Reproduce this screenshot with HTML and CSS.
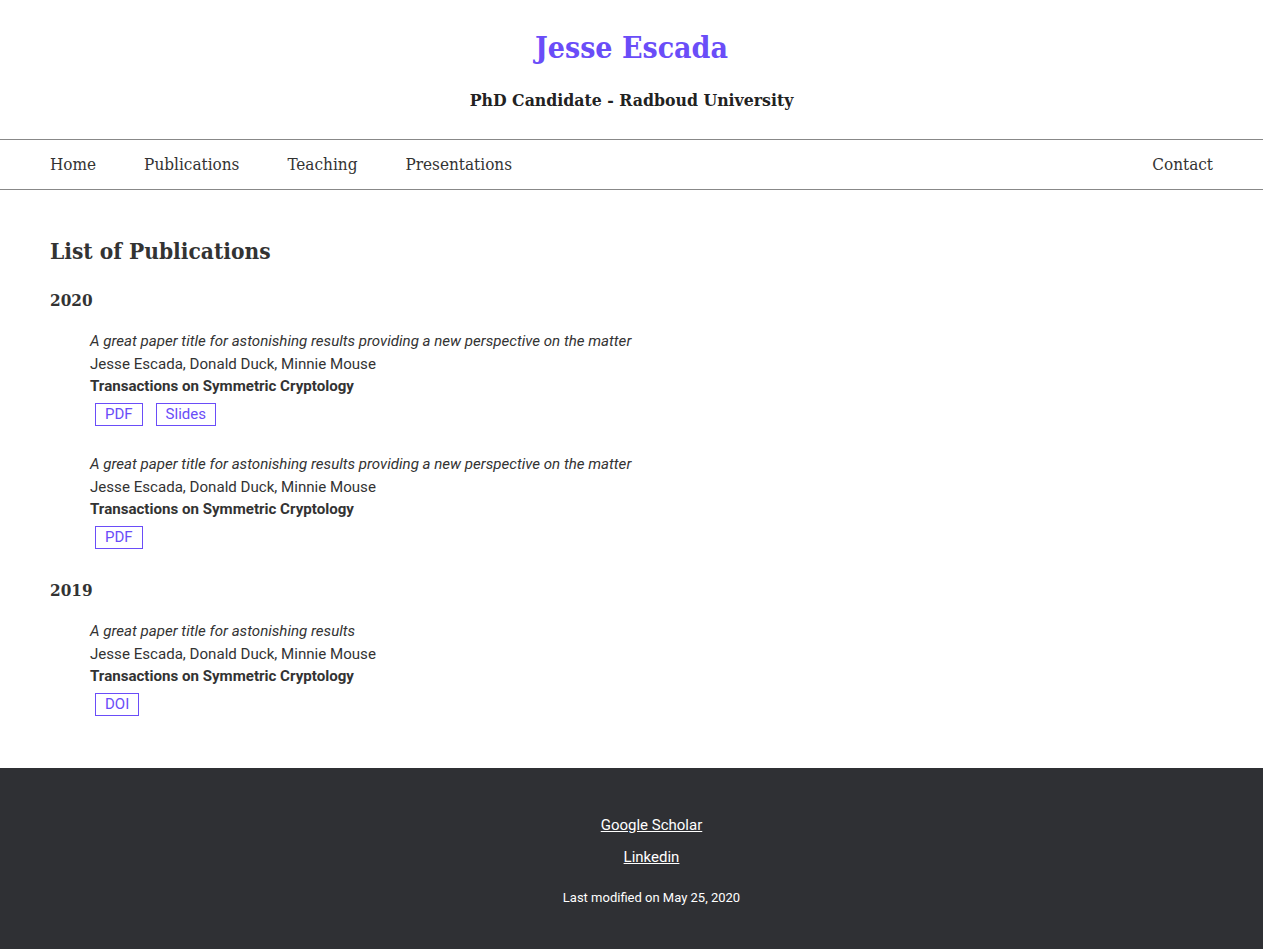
FILE: index.html
```html
<!DOCTYPE html>
<html lang="en">
<head>
<meta charset="utf-8">
<title>Jesse Escada - Publications</title>
<link rel="stylesheet" href="styles.css">
</head>
<body>
<header class="site-header">
  <h1 class="site-title">Jesse Escada</h1>
  <p class="site-subtitle">PhD Candidate - Radboud University</p>
</header>
<nav class="site-nav">
  <ul class="nav-left">
    <li><a href="#">Home</a></li>
    <li><a href="#">Publications</a></li>
    <li><a href="#">Teaching</a></li>
    <li><a href="#">Presentations</a></li>
  </ul>
  <ul class="nav-right">
    <li><a href="#">Contact</a></li>
  </ul>
</nav>
<main class="content">
  <h2 class="page-title">List of Publications</h2>
  <section class="year">
    <h3 class="year-title">2020</h3>
    <div class="pub">
      <div class="pub-title">A great paper title for astonishing results providing a new perspective on the matter</div>
      <div class="pub-authors">Jesse Escada, Donald Duck, Minnie Mouse</div>
      <div class="pub-venue">Transactions on Symmetric Cryptology</div>
      <div class="pub-links"><a class="btn" href="#">PDF</a><a class="btn" href="#">Slides</a></div>
    </div>
    <div class="pub">
      <div class="pub-title">A great paper title for astonishing results providing a new perspective on the matter</div>
      <div class="pub-authors">Jesse Escada, Donald Duck, Minnie Mouse</div>
      <div class="pub-venue">Transactions on Symmetric Cryptology</div>
      <div class="pub-links"><a class="btn" href="#">PDF</a></div>
    </div>
  </section>
  <section class="year">
    <h3 class="year-title">2019</h3>
    <div class="pub">
      <div class="pub-title">A great paper title for astonishing results</div>
      <div class="pub-authors">Jesse Escada, Donald Duck, Minnie Mouse</div>
      <div class="pub-venue">Transactions on Symmetric Cryptology</div>
      <div class="pub-links"><a class="btn" href="#">DOI</a></div>
    </div>
  </section>
</main>
<footer class="site-footer">
  <a class="footer-link" href="#">Google Scholar</a>
  <a class="footer-link" href="#">Linkedin</a>
  <p class="footer-note">Last modified on May 25, 2020</p>
</footer>
</body>
</html>
```
FILE: styles.css
```css
html, body {
  margin: 0;
  padding: 0;
}
body {
  font-family: Roboto, "Liberation Sans", sans-serif;
  color: #333;
  background: #fff;
}
.site-header {
  text-align: center;
  padding: 28px 0 27px;
}
.site-title {
  margin: 0;
  font-family: "DejaVu Serif Condensed", "DejaVu Serif", serif;
  font-stretch: condensed;
  font-size: 30px;
  line-height: 40px;
  font-weight: 700;
  color: #6a4df8;
}
.site-subtitle {
  margin: 20px 0 0;
  font-family: "DejaVu Serif Condensed", "DejaVu Serif", serif;
  font-stretch: condensed;
  font-size: 17.5px;
  line-height: 24px;
  font-weight: 700;
  color: #222;
}
.site-nav {
  display: flex;
  justify-content: space-between;
  border-top: 1px solid #888;
  border-bottom: 1px solid #888;
  padding: 0 50px;
}
.nav-left, .nav-right {
  list-style: none;
  margin: 0;
  padding: 0;
  display: flex;
  gap: 48px;
}
.site-nav a {
  display: block;
  line-height: 49px;
  font-family: "DejaVu Serif Condensed", "DejaVu Serif", serif;
  font-stretch: condensed;
  font-size: 17px;
  color: #333;
  text-decoration: none;
}
.content {
  padding: 46px 50px 52px;
}
.page-title {
  margin: 0;
  font-family: "DejaVu Serif Condensed", "DejaVu Serif", serif;
  font-stretch: condensed;
  font-size: 22.5px;
  line-height: 30px;
  font-weight: 700;
  color: #333;
}
.year-title {
  margin: 23px 0 19px;
  font-family: "DejaVu Serif Condensed", "DejaVu Serif", serif;
  font-stretch: condensed;
  font-size: 17px;
  line-height: 22px;
  font-weight: 700;
  color: #333;
}
.year + .year {
  padding-top: 3px;
}
.year + .year .year-title {
  margin-top: 0;
}
.pub {
  padding-left: 40px;
  margin-bottom: 27px;
  font-size: 15.1px;
  line-height: 22.5px;
}
.year:last-child .pub:last-child {
  margin-bottom: 0;
}
.pub-title {
  font-style: italic;
}
.pub-venue {
  font-weight: 700;
}
.pub-links {
  display: flex;
  gap: 13px;
  margin-top: 5.5px;
  padding-left: 5px;
}
.btn {
  display: block;
  border: 1px solid #6a4df8;
  padding: 0 9px;
  line-height: 21px;
  font-size: 15px;
  color: #6a4df8;
  text-decoration: none;
}
.site-footer {
  background: #2f3034;
  color: #fff;
  display: flex;
  flex-direction: column;
  align-items: center;
  padding: 46px 0 42px 40px;
}
.footer-link {
  color: #fff;
  font-size: 15px;
  line-height: 22px;
  text-decoration: underline;
}
.footer-link + .footer-link {
  margin-top: 10px;
}
.footer-note {
  margin: 20px 0 0;
  font-size: 13px;
  line-height: 20px;
}
```
